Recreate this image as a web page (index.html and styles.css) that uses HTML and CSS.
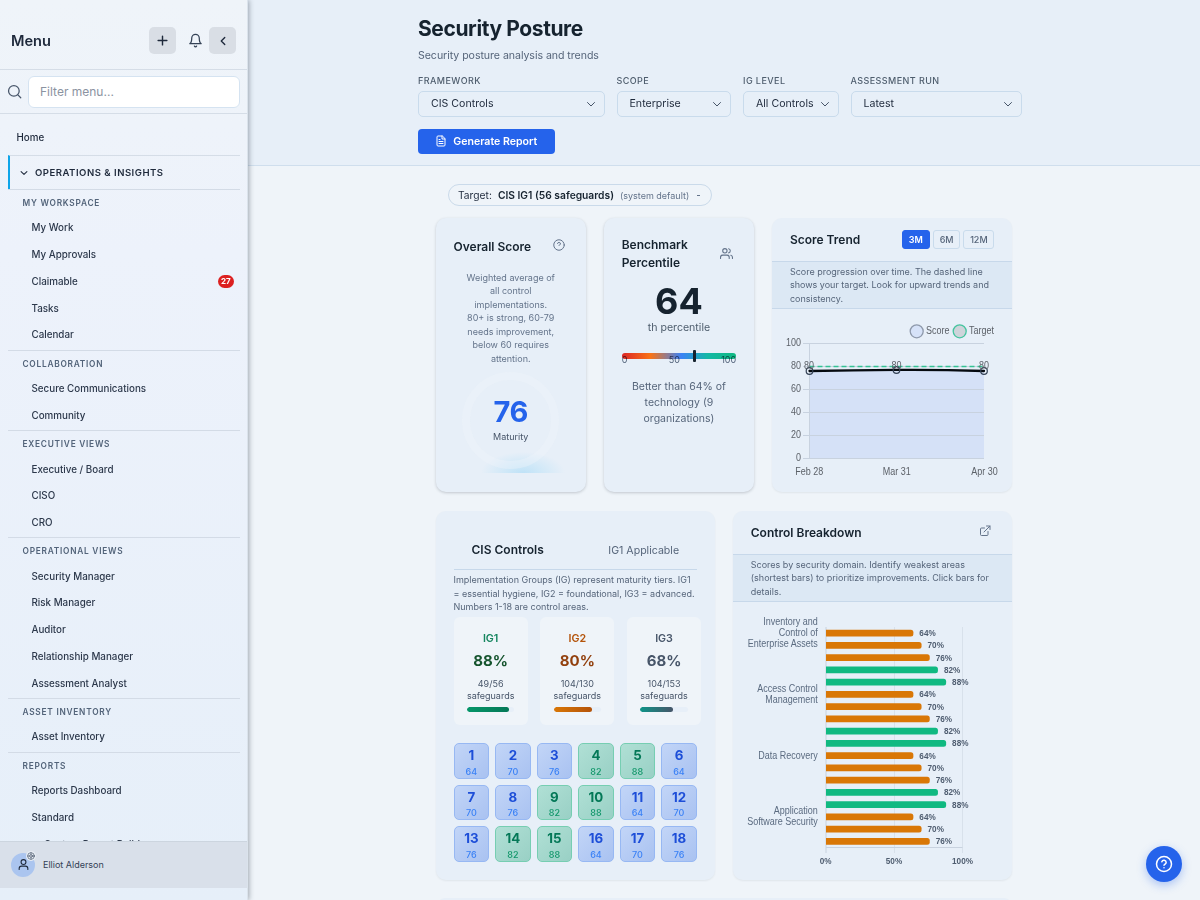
FILE: index.html
```html
<!DOCTYPE html>
<html lang="en">
<head>
<meta charset="utf-8">
<title>Security Posture</title>
<link rel="stylesheet" href="styles.css">
</head>
<body>
<div class="app">
  <aside class="sidebar">
    <div class="side-head">
      <h2>Menu</h2>
      <button class="sq"><svg width="15" height="15" viewBox="0 0 24 24"><path d="M5 12h14M12 5v14"/></svg></button>
      <span class="bell"><svg width="15" height="15" viewBox="0 0 24 24"><path d="M6 8a6 6 0 0 1 12 0c0 7 3 9 3 9H3s3-2 3-9M10.3 21a1.94 1.94 0 0 0 3.4 0"/></svg></span>
      <button class="sq"><svg width="14" height="14" viewBox="0 0 24 24"><path d="m15 18-6-6 6-6"/></svg></button>
    </div>
    <div class="side-search">
      <svg width="15" height="15" viewBox="0 0 24 24"><circle cx="11" cy="11" r="8.5"/><path d="m22 22-4.6-4.6"/></svg>
      <div class="filter">Filter menu...</div>
    </div>
    <nav class="nav">
      <div class="home">Home</div>
      <div class="section"><svg width="10" height="10" viewBox="0 0 24 24"><path d="m5 8.500 7 7 7-7"/></svg>OPERATIONS &amp; INSIGHTS</div>
      <div class="group first"><h3>MY WORKSPACE</h3><a>My Work</a><a>My Approvals</a><a>Claimable<b class="badge">27</b></a><a>Tasks</a><a>Calendar</a></div>
      <div class="group"><h3>COLLABORATION</h3><a>Secure Communications</a><a>Community</a></div>
      <div class="group"><h3>EXECUTIVE VIEWS</h3><a>Executive / Board</a><a>CISO</a><a>CRO</a></div>
      <div class="group"><h3>OPERATIONAL VIEWS</h3><a>Security Manager</a><a>Risk Manager</a><a>Auditor</a><a>Relationship Manager</a><a>Assessment Analyst</a></div>
      <div class="group"><h3>ASSET INVENTORY</h3><a>Asset Inventory</a></div>
      <div class="group"><h3>REPORTS</h3><a>Reports Dashboard</a><a>Standard</a><a class="sub">Custom Report Builder</a></div>
    </nav>
    <div class="user">
      <div class="avatar"><svg width="13" height="13" viewBox="0 0 24 24"><circle cx="12" cy="7.500" r="4.500"/><path d="M4 21v-1.500a4.500 4.500 0 0 1 4.500-4.500h7a4.500 4.500 0 0 1 4.500 4.500V21"/></svg>
        <span class="gear"><svg width="8" height="8" viewBox="0 0 24 24"><circle cx="12" cy="12" r="10"/><circle cx="12" cy="12" r="4"/><path d="M12 2v6M12 16v6M2 12h6M16 12h6"/></svg></span>
      </div>
      <span>Elliot Alderson</span>
    </div>
  </aside>
  <main class="main">
    <header class="top">
      <div class="top-in">
        <h1>Security Posture</h1>
        <p>Security posture analysis and trends</p>
        <div class="filters">
          <div class="field w1"><label>FRAMEWORK</label><div class="select">CIS Controls<svg width="12" height="12" viewBox="0 0 24 24"><path d="m5 9 7 7 7-7"/></svg></div></div>
          <div class="field w2"><label>SCOPE</label><div class="select">Enterprise<svg width="12" height="12" viewBox="0 0 24 24"><path d="m5 9 7 7 7-7"/></svg></div></div>
          <div class="field w3"><label>IG LEVEL</label><div class="select">All Controls<svg width="12" height="12" viewBox="0 0 24 24"><path d="m5 9 7 7 7-7"/></svg></div></div>
          <div class="field w4"><label>ASSESSMENT RUN</label><div class="select">Latest<svg width="12" height="12" viewBox="0 0 24 24"><path d="m5 9 7 7 7-7"/></svg></div></div>
        </div>
        <button class="generate"><svg width="12" height="12" viewBox="0 0 24 24"><path d="M14 2H6a2 2 0 0 0-2 2v16a2 2 0 0 0 2 2h12a2 2 0 0 0 2-2V8zM14 2v6h6M8 13h8M8 17h8M8 9h2"/></svg>Generate Report</button>
      </div>
    </header>
    <div class="content">
      <div class="target"><span>Target:</span><b>CIS IG1 (56 safeguards)</b><small>(system default)</small><i></i></div>
      <div class="row one">
        <section class="card raised score">
          <div class="card-title"><h2>Overall Score</h2><svg class="help" width="12" height="12" viewBox="0 0 24 24"><circle cx="12" cy="12" r="10.500"/><path d="M9 9a3 3 0 0 1 5.900 1c0 2-2.900 2.600-2.900 2.600"/></svg></div>
          <p class="desc">Weighted average of<br>all control<br>implementations.<br>80+ is strong, 60-79<br>needs improvement,<br>below 60 requires<br>attention.</p>
          <div class="gauge"><div class="ring"><strong>76</strong><span>Maturity</span></div></div>
        </section>
        <section class="card raised bench">
          <div class="card-title"><h2>Benchmark<br>Percentile</h2><svg width="13" height="13" viewBox="0 0 24 24"><path d="M17 21v-2a4 4 0 0 0-4-4H5a4 4 0 0 0-4 4v2"/><circle cx="9" cy="7" r="4"/><path d="M23 21v-2a4 4 0 0 0-3-3.870M16 3.130a4 4 0 0 1 0 7.750"/></svg></div>
          <strong class="big">64</strong>
          <div class="th">th percentile</div>
          <div class="scale"><i></i></div>
          <div class="ticks"><span>0</span><span>50</span><span>100</span></div>
          <p class="better">Better than 64% of<br>technology (9<br>organizations)</p>
        </section>
        <section class="card trend">
          <div class="card-head"><h2>Score Trend</h2><div class="seg"><b class="on">3M</b><b>6M</b><b class="wide">12M</b></div></div>
          <div class="note">Score progression over time. The dashed line<br>shows your target. Look for upward trends and<br>consistency.</div>
          <svg class="chart" width="240" height="182" viewBox="772 309 240 182">
            <g class="legend"><circle cx="916.700" cy="331.300" r="6.500" fill="#d6e2f8" stroke="#8e99ab"/><text x="926" y="334">Score</text><circle cx="959.700" cy="331.300" r="6.500" fill="#ced4da" stroke="#45c49f"/><text x="969" y="334">Target</text></g>
            <path d="M809.500 371Q853 370.200 896.500 369.900T984 371V458.500H809.500z" fill="#d5e1f7"/>
            <path class="grid" d="M803 343.500H984M803 366.500H984M803 389.500H984M803 412.500H984M803 435.500H984M803 458.500H984M809.500 343.500V458.500"/>
            <path d="M809.500 366.500H984" fill="none" stroke="#34c294" stroke-width="1.300" stroke-linecap="butt" stroke-dasharray="5 3"/>
            <path d="M809.500 371Q853 370.200 896.500 369.900T984 371" fill="none" stroke="#050a10" stroke-width="2.300"/>
            <g fill="none" stroke="#334155" stroke-width="1.200"><circle cx="809.500" cy="371" r="3.300"/><circle cx="896.500" cy="370" r="3.300"/><circle cx="984" cy="371" r="3.300"/></g>
            <g class="axis" text-anchor="end"><text x="801" y="346">100</text><text x="801" y="369">80</text><text x="801" y="392">60</text><text x="801" y="415">40</text><text x="801" y="438">20</text><text x="801" y="461">0</text></g>
            <g class="axis" text-anchor="middle"><text x="809.300" y="474.500">Feb 28</text><text x="896.700" y="474.500">Mar 31</text><text x="984.500" y="474.500">Apr 30</text><text x="809" y="368.700">80</text><text x="896.500" y="368.700">80</text><text x="984" y="368.700">80</text></g>
          </svg>
        </section>
      </div>
      <div class="row two">
        <section class="card cis">
          <div class="cis-head"><h2>CIS Controls</h2><span>IG1 Applicable</span></div>
          <p class="cis-note">Implementation Groups (IG) represent maturity tiers. IG1<br>= essential hygiene, IG2 = foundational, IG3 = advanced.<br>Numbers 1-18 are control areas.</p>
          <div class="igs">
            <div class="ig g1"><h4>IG1</h4><strong>88%</strong><p>49/56<br>safeguards</p><div class="bar"><i style="width:88%"></i></div></div>
            <div class="ig g2"><h4>IG2</h4><strong>80%</strong><p>104/130<br>safeguards</p><div class="bar"><i style="width:80%"></i></div></div>
            <div class="ig g3"><h4>IG3</h4><strong>68%</strong><p>104/153<br>safeguards</p><div class="bar"><i style="width:68%"></i></div></div>
          </div>
          <div class="tiles">
            <div class="tile"><b>1</b><span>64</span></div><div class="tile"><b>2</b><span>70</span></div><div class="tile"><b>3</b><span>76</span></div><div class="tile ok"><b>4</b><span>82</span></div><div class="tile ok"><b>5</b><span>88</span></div><div class="tile"><b>6</b><span>64</span></div>
            <div class="tile"><b>7</b><span>70</span></div><div class="tile"><b>8</b><span>76</span></div><div class="tile ok"><b>9</b><span>82</span></div><div class="tile ok"><b>10</b><span>88</span></div><div class="tile"><b>11</b><span>64</span></div><div class="tile"><b>12</b><span>70</span></div>
            <div class="tile"><b>13</b><span>76</span></div><div class="tile ok"><b>14</b><span>82</span></div><div class="tile ok"><b>15</b><span>88</span></div><div class="tile"><b>16</b><span>64</span></div><div class="tile"><b>17</b><span>70</span></div><div class="tile"><b>18</b><span>76</span></div>
          </div>
        </section>
        <section class="card breakdown">
          <div class="card-head"><h2>Control Breakdown</h2><svg width="12" height="12" viewBox="0 0 24 24"><path d="M18 13v6a2 2 0 0 1-2 2H5a2 2 0 0 1-2-2V8a2 2 0 0 1 2-2h6M15 2h7v7M10 14 22 2"/></svg></div>
          <div class="note">Scores by security domain. Identify weakest areas<br>(shortest bars) to prioritize improvements. Click bars for<br>details.</div>
          <svg class="chart" id="bars" width="279" height="277" viewBox="733 602 279 277">
            <path class="grid light" d="M894.500 627V853M962.500 627V853"/>
            <path class="grid" d="M826 627V853M826 847.500H962.500"/>
            <g class="lab" text-anchor="end"><text x="817.700" y="625">Inventory and</text><text x="817.700" y="636">Control of</text><text x="817.700" y="647">Enterprise Assets</text><text x="817.700" y="691.500">Access Control</text><text x="817.700" y="702.500">Management</text><text x="817.700" y="758.500">Data Recovery</text><text x="817.700" y="814">Application</text><text x="817.700" y="825">Software Security</text></g>
            <g class="pct" text-anchor="middle"><text x="825.700" y="863.500">0%</text><text x="894" y="863.500">50%</text><text x="962.500" y="863.500">100%</text></g>
            <g class="pct" id="series"></g>
          </svg>
        </section>
      </div>
      <div class="card peek"></div>
    </div>
  </main>
  <button class="fab"><svg width="18" height="18" viewBox="0 0 24 24"><circle cx="12" cy="12" r="10"/><path d="M9.100 9a3 3 0 0 1 5.800 1c0 2-2.900 2.700-2.900 3.700M12 17h.01"/></svg></button>
</div>
<script src="chart.js"></script>
</body>
</html>
```
FILE: styles.css
```css
* { box-sizing: border-box; }
html, body { margin: 0; height: 100%; overflow: hidden; }
body { font-family: Inter, "Liberation Sans", sans-serif; color: #1e293b; background: #eff4f9; }
h1, h2, h3, h4, p { margin: 0; }
button { border: 0; padding: 0; font-family: inherit; }
svg { fill: none; stroke: currentColor; stroke-width: 2; stroke-linecap: round; stroke-linejoin: round; flex: none; }
svg text { stroke: none; }
.app { display: flex; height: 900px; width: 1200px; overflow: hidden; }

.sidebar { width: 248px; flex: none; height: 900px; display: flex; flex-direction: column; background: linear-gradient(180deg, #eff4f9 0%, #edf2fb 28%, #e6eff9 100%); border-right: 1px solid #dbe3ec; box-shadow: 1px 0 5px rgba(30, 41, 59, .38); position: relative; z-index: 2; padding-bottom: 12px; }
.side-head { height: 70px; flex: none; display: flex; align-items: center; padding: 12px 11px 0 11px; border-bottom: 1px solid #d5dde7; }
.side-head h2 { font-size: 14.600px; font-weight: 600; flex: 1; line-height: 20px; }
.sq { width: 27px; height: 27px; border-radius: 5px; background: #d9dee5; display: grid; place-items: center; color: #1e293b; }
.sq svg { stroke-width: 2.300; }
.bell { width: 33px; display: grid; place-items: center; padding-left: 6px; color: #334155; }
.side-search { height: 44px; flex: none; display: flex; align-items: center; gap: 6px; padding: 0 7px 0 7px; border-bottom: 1px solid #d5dde7; color: #475569; }
.filter { flex: 1; height: 32px; border: 1px solid #d5e3f1; border-radius: 6px; background: #fff; font-size: 12px; line-height: 30px; padding-left: 11px; color: #8b93a1; }
.nav { flex: 1; min-height: 0; overflow: hidden; padding: 0 7px 0 8px; }
.home { height: 41px; padding: 13px 0 0 8.500px; font-size: 9.800px; line-height: 21px; font-weight: 500; }
.section { height: 34px; border-top: 1px solid #d5dde7; border-left: 2px solid #0ea5e9; display: flex; align-items: center; gap: 6px; padding: 0 0 0 9px; font-size: 9.550px; font-weight: 600; letter-spacing: .5px; }
.section svg { stroke-width: 2.500; }
.group { border-top: 1px solid #d3dbe6; padding-bottom: 1.400px; }
.group h3 { height: 24.500px; padding-left: 14.500px; font-size: 8.300px; line-height: 27.500px; font-weight: 600; letter-spacing: .76px; color: #53647a; }
.group a { display: flex; align-items: center; height: 26.770px; padding: 0 6px 0 23.500px; font-size: 9.800px; font-weight: 500; color: #2c384b; white-space: nowrap; }
.group a.sub { padding-left: 36px; }
.badge { margin-left: auto; height: 13.500px; min-width: 16.500px; border-radius: 7px; background: #dc2020; color: #fff; font-size: 8px; line-height: 13.500px; text-align: center; font-weight: 700; }
.user { height: 47.500px; flex: none; background: #d9e0ea; border-top: 1px solid #ccd5df; display: flex; align-items: center; gap: 8px; padding-left: 11px; font-size: 9px; color: #334155; }
.avatar { width: 24px; height: 24px; border-radius: 50%; background: #abc5ef; display: grid; place-items: center; position: relative; color: #1e293b; }
.gear { position: absolute; right: -1px; top: -1.500px; width: 10px; height: 10px; border-radius: 50%; background: #e6ecf3; display: grid; place-items: center; color: #475569; }

.main { flex: 1; min-width: 0; display: flex; flex-direction: column; }
.top { height: 166.300px; flex: none; background: #e7eff8; border-bottom: 1px solid #cfdeed; }
.top-in { width: 612px; margin: 0 auto; padding-top: 14.500px; }
.top h1 { font-size: 21px; line-height: 28px; font-weight: 700; letter-spacing: -.4px; color: #16232f; }
.top p { font-size: 10.600px; line-height: 16px; margin-top: 5px; color: #56657a; letter-spacing: -.05px; }
.filters { display: flex; gap: 12px; margin-top: 11.500px; }
.field label { display: block; font-size: 9px; line-height: 12px; letter-spacing: .43px; font-weight: 500; color: #4e5d6d; }
.select { height: 26.500px; margin-top: 3.600px; border: 1px solid #c9dbec; border-radius: 5px; display: flex; align-items: center; justify-content: space-between; padding: 0 7px 0 12px; font-size: 10.600px; color: #1e293b; }
.select svg { color: #475569; }
.w1 { width: 186.500px; } .w2 { width: 114.500px; } .w3 { width: 95.500px; } .w4 { width: 171.500px; }
.generate { margin-top: 11.700px; width: 136.500px; height: 25px; border-radius: 4px; background: #2563eb; color: #fff; font-size: 10.600px; font-weight: 600; display: flex; align-items: center; justify-content: center; gap: 6px; }
.content { width: 577px; margin: 0 auto; padding-top: 18px; }
.target { margin-left: 12.500px; width: 264px; height: 22px; border: 1px solid #cadaea; border-radius: 11px; display: flex; align-items: center; gap: 6px; padding-left: 9px; font-size: 10.250px; }
.target b { font-weight: 600; color: #16232f; white-space: nowrap; }
.target small { font-size: 9px; color: #64748b; white-space: nowrap; }
.target i { width: 3px; height: 1px; background: #64748b; margin-left: 2px; }
.row { display: grid; gap: 17.700px; }
.one { grid-template-columns: 150.500px 150.500px 240.500px; margin-top: 12.200px; height: 273.500px; }
.two { grid-template-columns: 279.600px 279.600px; margin-top: 19px; height: 369px; }
.card { background: #e7eff8; border-radius: 10px; box-shadow: 0 1px 2px rgba(30, 41, 59, .07); min-width: 0; }
.card h2 { font-size: 12px; font-weight: 600; line-height: 18px; color: #16232f; }
.raised { padding: 18px; box-shadow: 0 1px 3px rgba(30, 41, 59, .22); }
.card-title { display: flex; justify-content: space-between; align-items: center; color: #64748b; white-space: nowrap; }
.score .card-title { padding: 1.500px 3px 0 0; }
.help { margin-top: -3px; }
.desc { margin-top: 15px; font-size: 9px; line-height: 13.500px; text-align: center; color: #64748b; }
.gauge { height: 108px; padding-top: 7px; background: radial-gradient(ellipse 42px 21px at 69px 108px, #bfe2f7 0%, #cfe8f8 40%, rgba(231, 239, 248, 0) 100%); }
.ring { width: 97px; height: 97px; margin: 0 auto; border: 8px solid rgba(240, 244, 249, .38); border-radius: 50%; display: flex; flex-direction: column; align-items: center; }
.ring strong { font-size: 29px; line-height: 34px; margin-top: 15px; color: #2563eb; letter-spacing: -.3px; }
.ring span { font-size: 9px; line-height: 14px; color: #475569; margin-top: 1px; }
.bench .card-title { padding-right: 2px; }
.bench .card-title svg { margin-top: -1px; margin-right: 1px; }
.big { display: block; font-size: 36px; line-height: 36px; text-align: center; margin-top: 11px; color: #16232f; }
.th { text-align: center; font-size: 10.600px; line-height: 16px; margin-top: 1px; color: #4e5d6d; }
.scale { height: 6px; border-radius: 3px; margin-top: 17px; background: linear-gradient(90deg, #dc2626, #f97316 25%, #3b82f6 52%, #14b8a6 75%, #10b981); position: relative; }
.scale i { position: absolute; left: 62.500%; top: -3px; width: 3px; height: 12px; background: #16232f; border-radius: 1px; }
.ticks { display: flex; justify-content: space-between; font-size: 9px; line-height: 12px; margin-top: -5px; color: #56657a; mix-blend-mode: multiply; }
.better { margin-top: 12.500px; font-size: 10.500px; line-height: 16px; text-align: center; color: #56657a; white-space: nowrap; }
.card-head { height: 43.300px; display: flex; align-items: center; justify-content: space-between; padding: 0 18px; border-bottom: 1px solid #c7d8ea; color: #64748b; }
.seg { display: flex; gap: 3.300px; }
.seg b { width: 27px; height: 19px; border: 1px solid #c9dbec; border-radius: 3px; font-size: 9px; line-height: 18px; font-weight: 500; text-align: center; color: #56657a; }
.seg .on { width: 28px; background: #2563eb; border-color: #2563eb; color: #fff; font-weight: 600; }
.seg .wide { width: 31px; }
.note { height: 47.500px; padding: 3px 0 0 18px; background: #dce8f4; border-bottom: 1px solid #c7d8ea; font-size: 9px; line-height: 13.500px; color: #56657a; white-space: nowrap; }
.chart { display: block; font-family: "Liberation Sans", sans-serif; font-size: 9px; stroke: none; }
.chart text { fill: #5c6168; transform: scaleY(1.12); transform-box: fill-box; transform-origin: 50% 60%; }
.legend circle { stroke-width: 1.300; }
.grid { stroke: #c8d2df; stroke-width: 1; stroke-linecap: butt; }
.light { stroke: #d8e1eb; }
.chart .lab text { fill: #5b6b80; }
.chart .pct text { fill: #4f5d70; font-size: 8.200px; font-weight: 700; transform: scaleY(1.08); }
.cis { padding: 18px; }
.cis-head { height: 41.500px; display: flex; align-items: center; justify-content: space-between; padding: 1px 18px 0; border-bottom: 1px solid #c7d8ea; margin-bottom: 3px; }
.cis-head span { font-size: 10.600px; color: #56657a; padding-top: 1px; }
.cis-note { font-size: 9px; line-height: 13.500px; color: #56657a; white-space: nowrap; }
.igs { display: grid; grid-template-columns: repeat(3, 74.300px); gap: 12.400px; margin-top: 3px; }
.ig { height: 108px; border-radius: 6px; background: #eff4f9; padding: 14.500px 13.500px 0; text-align: center; color: #475569; }
.ig h4 { font-size: 10.700px; line-height: 16px; font-weight: 600; }
.ig strong { display: block; font-size: 15px; line-height: 20px; margin-top: 3.500px; }
.ig p { font-size: 9px; line-height: 12px; margin: 7px -5px 0; }
.bar { height: 5px; margin-top: 5px; background: #e7eff8; border-radius: 3px; overflow: hidden; }
.bar i { display: block; height: 5px; border-radius: 3px; background: linear-gradient(90deg, #0d9488, #475569); }
.g1 h4 { color: #15855f; } .g1 strong { color: #14532d; } .g1 i { background: linear-gradient(90deg, #059669, #047857); }
.g2 h4 { color: #b45309; } .g2 strong { color: #92400e; } .g2 i { background: linear-gradient(90deg, #d97706, #b45309); }
.tiles { display: grid; grid-template-columns: repeat(6, 35.700px); gap: 5.850px; margin-top: 18px; }
.tile { height: 35.700px; border: 1px solid #97b8f3; border-radius: 5px; background: linear-gradient(135deg, #c2d5f7, #a9c2f1); display: flex; flex-direction: column; align-items: center; color: #1d4ed8; }
.tile b { font-size: 13.300px; line-height: 16px; font-weight: 700; margin-top: 3.300px; }
.tile span { font-size: 9px; line-height: 12px; margin-top: 2.500px; font-weight: 500; color: #3b82f6; }
.ok { border-color: #76ceb2; background: linear-gradient(135deg, #b0e0d5, #99d0c5); color: #047857; }
.ok span { color: #109669; }
.breakdown .card-head { height: 43.800px; padding-top: 1px; }
.breakdown .card-head svg { margin: -4px 3px 0 0; }
.peek { height: 40px; margin-top: 18.500px; }
.fab { position: absolute; left: 1146px; top: 846px; width: 36px; height: 36px; border-radius: 50%; background: #2563eb; color: #fff; display: grid; place-items: center; box-shadow: 0 3px 10px rgba(37, 99, 235, .35); }
```
FILE: chart.js
```js
const svgNs = "http://www.w3.org/2000/svg";
const series = document.getElementById("series");
const values = [64, 70, 76, 82, 88];
for (let i = 0; i < 18; i++) {
  const value = values[i % 5];
  const y = 633.2 + i * 12.24;
  const w = value * 1.365;
  const bar = document.createElementNS(svgNs, "path");
  bar.setAttribute("d", `M826 ${y - 3.4}h${w - 2.5}q2.500 0 2.500 2.500v1.800q0 2.500-2.500 2.500h${2.5 - w}z`);
  bar.setAttribute("fill", value > 80 ? "#10b981" : "#d97706");
  series.appendChild(bar);
  const label = document.createElementNS(svgNs, "text");
  label.setAttribute("x", 826 + w + 6);
  label.setAttribute("y", y + 2.8);
  label.textContent = value + "%";
  series.appendChild(label);
}
```
